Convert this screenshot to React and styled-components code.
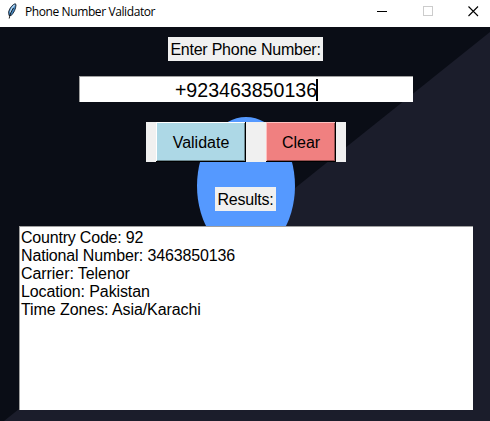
import React from "react";
import styled, { createGlobalStyle, css } from "styled-components";

const GlobalStyle = createGlobalStyle`
  * { box-sizing: border-box; }
  body { margin: 0; overflow: hidden; background: #0a0d16; }
`;

const Window = styled.div`
  display: flex;
  flex-direction: column;
  width: 490px;
  height: 421px;
  font-family: "Liberation Sans", Arial, sans-serif;
  font-size: 16px;
  line-height: 18px;
  color: #000;
`;

const TitleBar = styled.header`
  display: flex;
  align-items: center;
  flex: none;
  height: 27px;
  padding: 0 10px 0 7px;
  background: #fff;
`;

const Title = styled.h1`
  flex: 1;
  margin: 0 0 3px 7px;
  font: 400 12px/16px "Segoe UI", "Open Sans", sans-serif;
  letter-spacing: -0.4px;
  white-space: nowrap;
`;

const Controls = styled.div`
  display: flex;
  gap: 35px;
  margin-bottom: 5px;
`;

const FeatherIcon = styled.svg`
  flex: none;
  margin-bottom: 5px;
`;

const Body = styled.main`
  position: relative;
  display: flex;
  flex-direction: column;
  align-items: center;
  flex: 1;
  padding: 10px 0 0 2px;
  background: #0a0d16;
`;

const Backdrop = styled.svg`
  position: absolute;
  inset: 0;
`;

const Label = styled.label`
  position: relative;
  width: ${(p) => p.$width}px;
  height: 24px;
  margin-right: 1px;
  line-height: 25px;
  letter-spacing: -0.24px;
  text-align: center;
  white-space: nowrap;
  background: #f0f0f0;
`;

const Entry = styled.div`
  position: relative;
  display: flex;
  align-items: center;
  justify-content: center;
  width: 334px;
  height: 26px;
  margin-top: 15px;
  border: solid #a0a0a0;
  border-width: 1px 0 0 1px;
  background: #fff;
  font-size: 19.6px;
`;

const Caret = styled.span`
  width: 2px;
  height: 22px;
  margin-left: -1px;
  background: #000;
`;

const ButtonRow = styled.div`
  position: relative;
  display: flex;
  gap: 20px;
  height: 40px;
  margin: 20px 0 25px;
  padding: 0 10px;
  background: #f0f0f0;
`;

const tones = {
  blue: css`
    width: 90px;
    background: #add8e6;
    box-shadow: inset -1px -1px #000, inset 1px 1px #fff, inset -2px -2px #6c878f;
  `,
  coral: css`
    width: 70px;
    background: #f08080;
    box-shadow: inset -1px -1px #000, inset 1px 1px #ffc0c0, inset -2px -2px #965050;
  `,
};

const Button = styled.button`
  height: 40px;
  padding: 1px 0 0;
  border: 0;
  font: inherit;
  color: #000;
  ${(p) => tones[p.$tone]}
`;

const Output = styled.div`
  position: relative;
  width: 454px;
  height: 184px;
  margin-top: 15px;
  padding: 2px 0 0 1px;
  border: solid #a0a0a0;
  border-width: 1px 0 0 1px;
  background: #fff;
`;

const Line = styled.div`
  height: 18px;
  letter-spacing: ${(p) => p.$tracking}px;
  white-space: nowrap;
`;

const results = [
  { text: "Country Code: 92", tracking: -0.2 },
  { text: "National Number: 3463850136", tracking: -0.15 },
  { text: "Carrier: Telenor", tracking: -0.07 },
  { text: "Location: Pakistan", tracking: -0.11 },
  { text: "Time Zones: Asia/Karachi", tracking: -0.08 },
];

function Feather() {
  return (
    <FeatherIcon width="11" height="16" viewBox="0 0 11 16">
      <path d="M8.3 0.7 C5.5 1.5 2.5 5 1.6 9 L2 12.5 L4.2 12.5 C7 9.5 8.8 6 9 2 Z" fill="#4388c4" stroke="#182230" strokeWidth="0.9" />
      <path d="M7.6 2 C5.2 4 4 6.5 3.2 9.5" fill="none" stroke="#b8d8f2" strokeWidth="1.4" />
      <path d="M6.5 5 C4.5 8 3 11 2.2 15.5" fill="none" stroke="#111" strokeWidth="0.9" />
    </FeatherIcon>
  );
}

export default function App() {
  return (
    <Window>
      <GlobalStyle />
      <TitleBar>
        <Feather />
        <Title>Phone Number Validator</Title>
        <Controls>
          <svg width="11" height="11" shapeRendering="crispEdges">
            <path d="M0 5.5H10" stroke="#000" />
          </svg>
          <svg width="10" height="11" shapeRendering="crispEdges">
            <rect x="0.5" y="0.5" width="9" height="9" fill="none" stroke="#ccc" />
          </svg>
          <svg width="12" height="11">
            <path d="M0.5 0.5L10 10M10 0.5L0.5 10" stroke="#000" strokeWidth="1.1" />
          </svg>
        </Controls>
      </TitleBar>
      <Body>
        <Backdrop width="490" height="394" viewBox="0 27 490 394">
          <path d="M490 32L4 421H490Z" fill="#1b1d2b" />
          <ellipse cx="246" cy="186" rx="49" ry="69" fill="#5599ff" />
        </Backdrop>
        <Label $width={155}>Enter Phone Number:</Label>
        <Entry>
          +923463850136
          <Caret />
        </Entry>
        <ButtonRow>
          <Button $tone="blue">Validate</Button>
          <Button $tone="coral">Clear</Button>
        </ButtonRow>
        <Label $width={61}>Results:</Label>
        <Output>
          {results.map(({ text, tracking }) => (
            <Line key={text} $tracking={tracking}>{text}</Line>
          ))}
        </Output>
      </Body>
    </Window>
  );
}
